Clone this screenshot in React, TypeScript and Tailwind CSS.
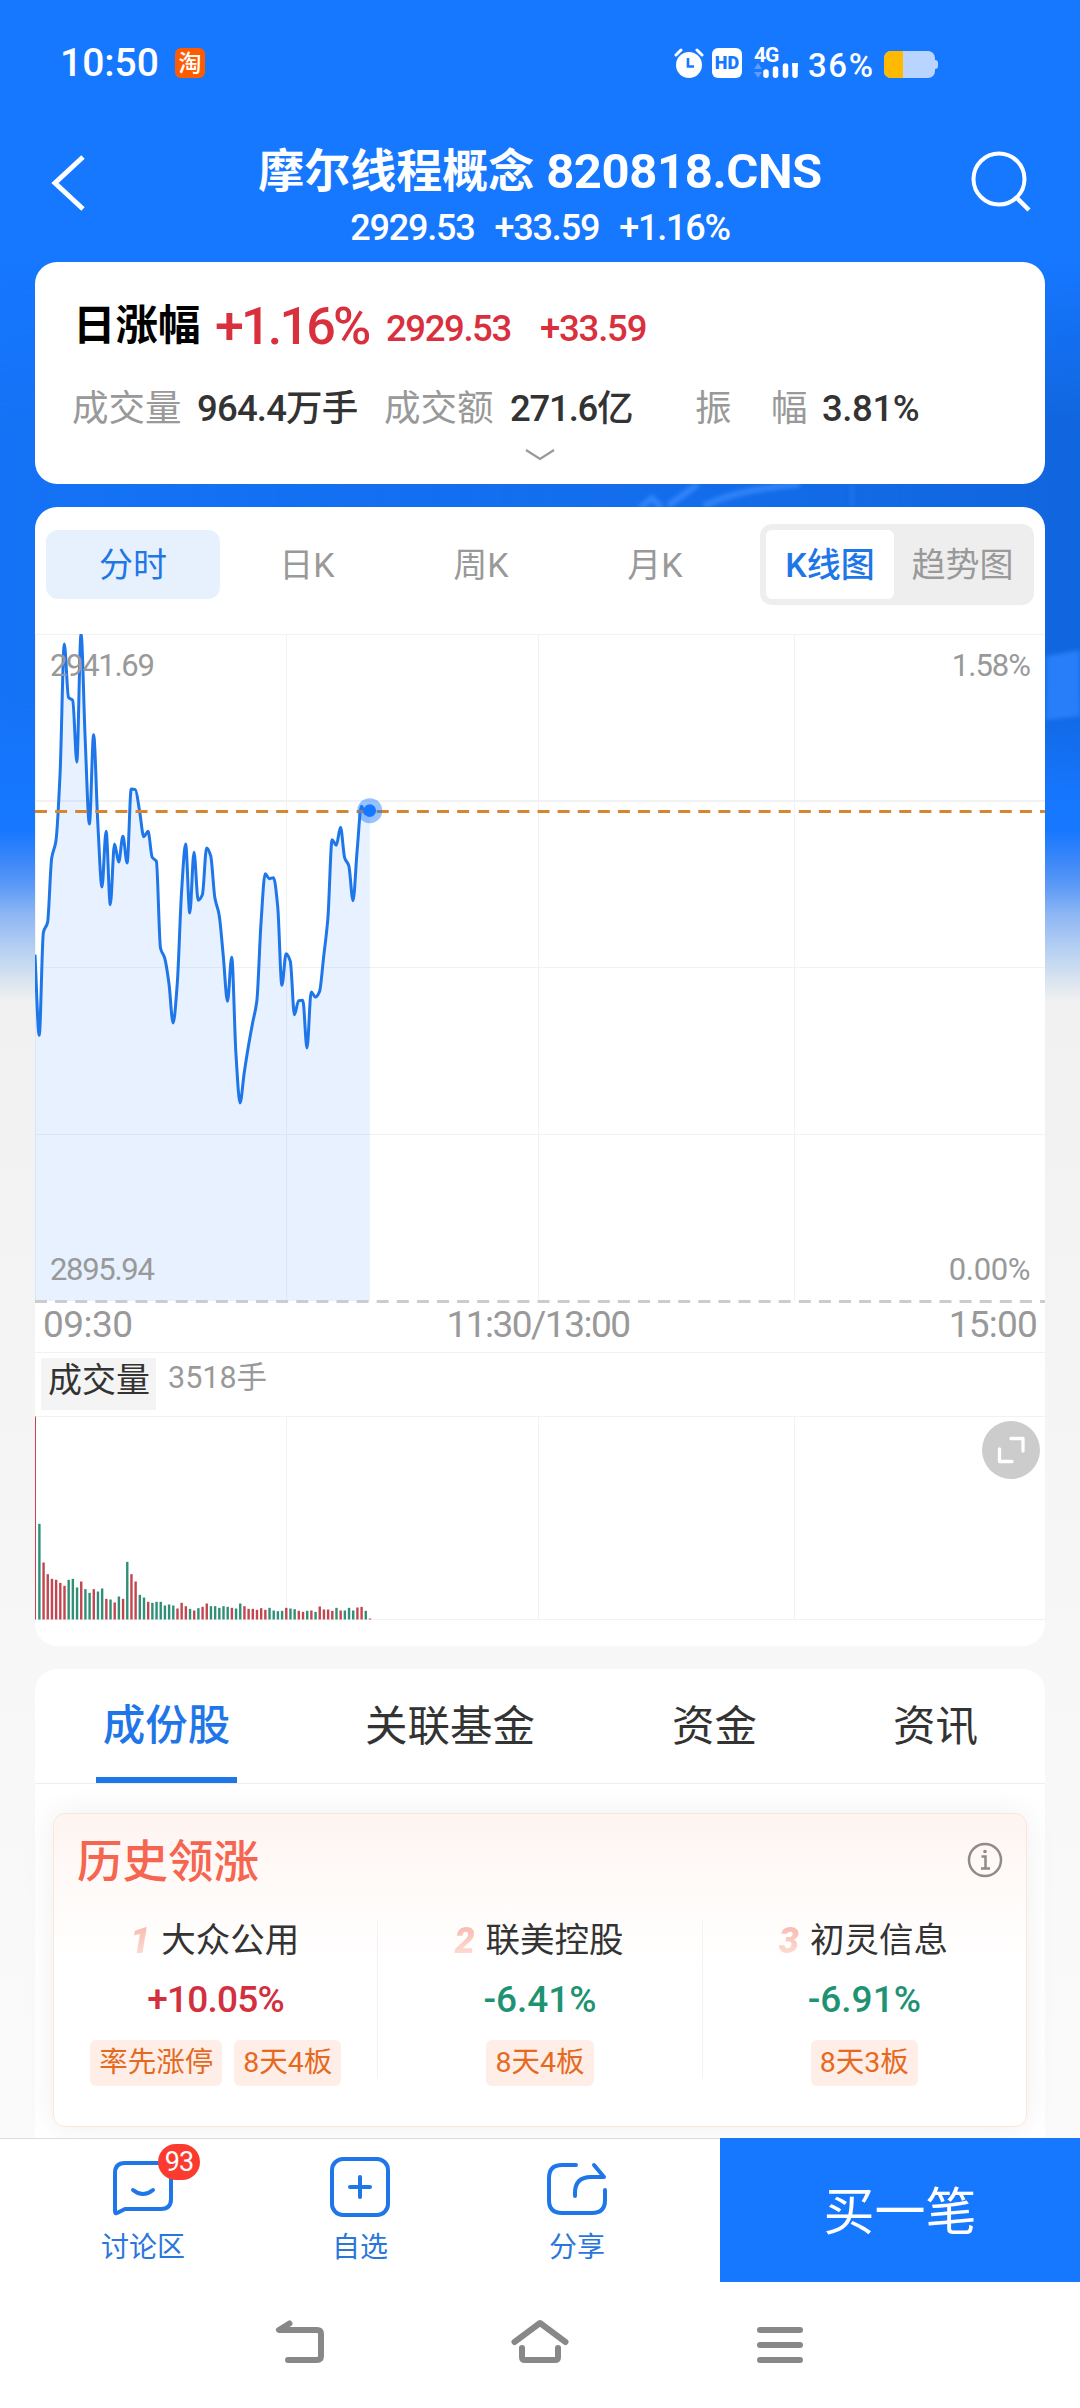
import React from "react";

/* ---------- data ---------- */

const MINUTE = 1011 / 241.6;

// Price level for every minute since the open, in chart pixels from the top grid line.
const PRICE = [
  1035, 1277, 968, 938, 745, 695, 490, 103, 263, 272, 457, 72, 390, 643, 375, 640, 832, 665, 885, 703, 757, 680, 760,
  538, 540, 605, 681, 665, 743, 755, 1015, 1045, 1120, 1240, 1120, 850, 703, 910, 728, 872, 855, 715, 740, 865, 915,
  1040, 1175, 1043, 1330, 1480, 1390, 1310, 1240, 1175, 940, 792, 807, 804, 890, 1127, 1032, 1055, 1215, 1173, 1172,
  1315, 1147, 1162, 1145, 1040, 925, 690, 707, 653, 745, 768, 873, 720, 590, 612, 603,
].map((v) => (v - 73) / 3);

// Traded volume per minute (bar height) and whether the minute closed up or down.
const VOLUME =
  "609r 287g 171r 136r 122r 119r 110r 101r 119g 122g 96g 114r 91g 80g 91r 84g 93g 62r 60g 51r 69g 62r 173g 136r 114r 74g 66g 53r 50g 53g 53g 42g 45g 42g 33r 50r 40r 32g 27r 34g 38r 48r 40g 40g 35g 40g 38g 35r 33g 48g 40r 32r 32r 29r 34r 29r 35g 27g 25g 26g 35r 33g 31g 26r 23r 26g 27r 23g 39r 30r 30r 26r 35g 27r 27g 35g 27g 36r 38r 26g 3r"
    .split(" ")
    .map((s) => ({ h: parseInt(s, 10) / 3, up: s.endsWith("r") }));

// Monotone cubic path through the equally spaced samples.
function smoothPath(ys: number[], dx: number) {
  const n = ys.length;
  const d = ys.slice(1).map((y, i) => (y - ys[i]) / dx);
  const m = ys.map((_, i) => {
    if (i === 0) return d[0];
    if (i === n - 1) return d[n - 2];
    if (d[i - 1] * d[i] <= 0) return 0;
    return (2 * d[i - 1] * d[i]) / (d[i - 1] + d[i]);
  });
  let p = `M0 ${ys[0].toFixed(1)}`;
  for (let i = 0; i < n - 1; i++) {
    const x = i * dx;
    p += `C${(x + dx / 3).toFixed(1)} ${(ys[i] + (m[i] * dx) / 3).toFixed(1)} ${(x + (2 * dx) / 3).toFixed(1)} ${(
      ys[i + 1] -
      (m[i + 1] * dx) / 3
    ).toFixed(1)} ${(x + dx).toFixed(1)} ${ys[i + 1].toFixed(1)}`;
  }
  return p;
}

/* ---------- header ---------- */

function StatusBar() {
  return (
    <div className="flex h-[126px] items-center pl-[60px] text-white">
      <span className="w-[115px] text-[39px] font-medium leading-none">10:50</span>
      <span className="flex h-[30px] w-[30px] items-center justify-center rounded-[6px] bg-[#ff5c00] text-[23px] font-medium leading-none">
        淘
      </span>
      <svg className="ml-[469px] h-[30px] w-[30px]" viewBox="0 0 30 30" fill="none">
        <circle cx="15" cy="17" r="13" fill="#fff" />
        <path d="M2 7L7 2M28 7L23 2" stroke="#fff" strokeWidth="3" strokeLinecap="round" />
        <path d="M14 10V18.5H20" stroke="#1677ff" strokeWidth="2.6" />
      </svg>
      <span className="ml-[8px] flex h-[30px] w-[30px] items-center justify-center rounded-[6px] bg-white text-[18px] font-black leading-none text-[#1677ff]">
        HD
      </span>
      <span className="ml-[12px] flex h-[30px] w-[46px] flex-col">
        <span className="h-[15px] text-[21px] font-bold leading-[15px] tracking-[-1px]">4G</span>
        <svg className="h-[15px] w-[46px]" viewBox="0 0 46 15">
          <path d="M0 6L4 0L8 6ZM0 9L4 15L8 9Z" fill="#5c9dff" />
          <path
            d="M12 9V12.200M21.500 6V12.200M31.500 3V12.200M41 0.500V12.200"
            stroke="#fff"
            strokeWidth="5.500"
            strokeLinecap="round"
          />
          <path d="M41 -3V4" stroke="#fff" strokeWidth="5.500" />
        </svg>
      </span>
      <span className="ml-[8px] mt-[4px] w-[76px] text-[33px] font-medium leading-none tracking-[1.600px]">36%</span>
      <span className="mt-[2px] flex items-center">
        <span className="flex h-[27px] w-[51px] overflow-hidden rounded-[7px] bg-[#b9d5ff]">
          <span className="w-[19px] bg-[#ffb900]" />
        </span>
        <span className="h-[9px] w-[3px] rounded-r-[3px] bg-[#b9d5ff]" />
      </span>
    </div>
  );
}

function TitleBar() {
  return (
    <div className="flex h-[136px] justify-between text-white">
      <svg className="ml-[44px] mr-[20px] mt-[24px] h-[66px] w-[48px]" viewBox="0 0 48 66" fill="none">
        <path d="M39 7L11 33L39 59" stroke="#fff" strokeWidth="5" />
      </svg>
      <div className="flex flex-col items-center">
        <div className="mt-[22px] flex h-[46px] items-center text-[46px] font-bold leading-none">
          摩尔线程概念<span className="ml-[12px] text-[49px] tracking-[-0.400px]">820818.CNS</span>
        </div>
        <div className="mt-[16px] flex gap-[20px] text-[36px] font-medium leading-none tracking-[-1.200px]">
          <span>2929.53</span>
          <span>+33.59</span>
          <span>+1.16%</span>
        </div>
      </div>
      <svg className="mr-[44px] mt-[20px] h-[72px] w-[68px]" viewBox="0 0 68 72" fill="none">
        <circle cx="31" cy="33" r="25.500" stroke="#fff" strokeWidth="4" />
        <path d="M49 52L61 64" stroke="#fff" strokeWidth="4.500" />
      </svg>
    </div>
  );
}

/* ---------- summary card ---------- */

function SummaryCard() {
  return (
    <section className="mx-[35px] flex h-[222px] flex-col rounded-[22px] bg-white">
      <div className="mt-[35px] flex h-[56px] items-center pl-[38px] leading-none text-[#d9303e]">
        <span className="mt-[2px] w-[142px] text-[42.500px] font-bold text-black">日涨幅</span>
        <span className="mt-[4px] w-[171px] text-[52px] font-medium tracking-[-2.800px]">+1.16%</span>
        <span className="mt-[9px] w-[154px] text-[36.500px] font-medium tracking-[-1.400px]">2929.53</span>
        <span className="mt-[9px] text-[36.500px] font-medium tracking-[-1.200px]">+33.59</span>
      </div>
      <div className="mt-[36px] flex h-[40px] items-center pl-[37px] text-[36.500px] leading-none">
        <span className="w-[125px] text-[#999]">成交量</span>
        <span className="w-[187px] font-medium tracking-[-0.800px] text-[#333]">964.4万手</span>
        <span className="w-[126px] text-[#999]">成交额</span>
        <span className="w-[185px] font-medium tracking-[-1.200px] text-[#333]">271.6亿</span>
        <span className="w-[76px] text-[#999]">振</span>
        <span className="w-[51px] text-[#999]">幅</span>
        <span className="font-medium tracking-[-0.400px] text-[#333]">3.81%</span>
      </div>
      <svg className="mx-auto mt-[17px] h-[16px] w-[32px]" viewBox="0 0 32 16" fill="none">
        <path d="M2 4L16 13L30 4" stroke="#999" strokeWidth="2.200" />
      </svg>
    </section>
  );
}

/* ---------- chart card ---------- */

function Grid({ height, rows }: { height: number; rows: number[] }) {
  return (
    <g stroke="#f2f2f2" strokeWidth="1">
      {rows.map((y) => (
        <path key={y} d={`M0 ${y}H1011`} />
      ))}
      {[0.5, 251.5, 503.5, 759.5, 1010.5].map((x) => (
        <path key={x} d={`M${x} 0V${height}`} />
      ))}
    </g>
  );
}

function PriceChart() {
  const line = smoothPath(PRICE, MINUTE);
  const endX = (PRICE.length - 1) * MINUTE;
  const endY = PRICE[PRICE.length - 1];
  return (
    <div className="relative h-[670px]">
      <svg className="block h-[670px] w-[1011px]" viewBox="0 0 1011 670" fill="none">
        <Grid height={667} rows={[0.5, 333.5, 500.5]} />
        <path d="M0 167H1011" stroke="#f2f2f2" strokeWidth="2" />
        <path d={`${line}V667H0Z`} fill="#1677ff" fillOpacity="0.100" />
        <path d={line} stroke="#1e76e8" strokeWidth="3" strokeLinejoin="round" />
        <path d="M0 177.500H1011" stroke="#d4872f" strokeWidth="3" strokeDasharray="12 8.100" />
        <path d="M0 667.500H1011" stroke="#ccc" strokeWidth="3" strokeDasharray="12 8.100" />
        <circle cx={endX} cy={endY} r="12.500" fill="#1677ff" fillOpacity="0.450" />
        <circle cx={endX} cy={endY} r="6.300" fill="#1677ff" />
      </svg>
      <div className="absolute inset-x-[15px] inset-y-0 flex flex-col justify-between pb-[19px] pt-[16px] text-[31px] leading-none text-[#999]">
        <div className="flex justify-between">
          <span className="tracking-[-1.300px]">2941.69</span>
          <span className="tracking-[-1px]">1.58%</span>
        </div>
        <div className="flex justify-between">
          <span className="tracking-[-1.300px]">2895.94</span>
          <span className="tracking-[-0.400px]">0.00%</span>
        </div>
      </div>
    </div>
  );
}

function VolumeChart() {
  return (
    <div className="relative h-[204px]">
      <svg className="block h-[204px] w-[1011px]" viewBox="0 0 1011 204">
        <Grid height={203} rows={[0.5, 203.5]} />
        {VOLUME.map((v, i) => (
          <rect
            key={i}
            x={i === 0 ? 0 : i * MINUTE - 1}
            y={203.5 - v.h}
            width={i === 0 ? 1 : 2.4}
            height={v.h}
            fill={v.up ? "#c2464f" : "#2f8f77"}
          />
        ))}
      </svg>
      <svg className="absolute right-[5px] top-[5px] h-[58px] w-[58px]" viewBox="0 0 58 58" fill="none">
        <circle cx="29" cy="29" r="29" fill="#ccc" />
        <path
          d="M29 17.500H41V30M17.500 28V40.500H30"
          stroke="#fff"
          strokeWidth="3.300"
          strokeLinecap="round"
          strokeLinejoin="round"
        />
      </svg>
    </div>
  );
}

function ChartCard() {
  return (
    <section className="mx-[35px] mt-[23px] flex h-[1139px] flex-col overflow-hidden rounded-[22px] bg-white">
      <div className="mt-[17px] flex h-[81px] items-center pl-[11px] text-[34px] leading-none text-[#999]">
        <span className="flex h-[69px] w-[174px] items-center justify-center rounded-[12px] bg-[#e7f1fe] text-[#1f76e6]">
          分时
        </span>
        {["日K", "周K", "月K"].map((t) => (
          <span key={t} className="w-[174px] text-center">
            {t}
          </span>
        ))}
        <div className="ml-[18px] flex h-[81px] w-[274px] items-center rounded-[12px] bg-[#eee] pl-[6px]">
          <span className="flex h-[69px] w-[128px] items-center justify-center rounded-[6px] bg-white font-medium text-[#1f76e6]">
            K线图
          </span>
          <span className="w-[137px] text-center">趋势图</span>
        </div>
      </div>
      <div className="h-[29px]" />
      <PriceChart />
      <div className="flex h-[49px] justify-between border-b border-[#f2f2f2] px-[8px] pt-[2px] text-[37px] leading-none text-[#999]">
        <span className="w-[200px] tracking-[-0.500px]">09:30</span>
        <span className="pr-[4px] tracking-[-1.500px]">11:30/13:00</span>
        <span className="w-[200px] text-right tracking-[-0.800px]">15:00</span>
      </div>
      <div className="flex h-[63px] pl-[6px] pt-[5px] leading-none">
        <span className="h-[52px] w-[115px] bg-[#f4f4f4] pl-[7px] pt-[5px] text-[34px] text-[#333]">成交量</span>
        <span className="ml-[12px] mt-[5px] text-[30.500px] text-[#999]">3518手</span>
      </div>
      <VolumeChart />
    </section>
  );
}

/* ---------- constituents card ---------- */

function Tag({ children }: { children: React.ReactNode }) {
  return (
    <span className="flex h-[46px] items-center rounded-[6px] bg-[#feeee7] px-[9px] text-[28.500px] leading-none text-[#e56a1f]">
      {children}
    </span>
  );
}

type Leader = { rank: string; name: string; change: string; up: boolean; tags: string[] };

const LEADERS: Leader[] = [
  { rank: "1", name: "大众公用", change: "+10.05%", up: true, tags: ["率先涨停", "8天4板"] },
  { rank: "2", name: "联美控股", change: "-6.41%", up: false, tags: ["8天4板"] },
  { rank: "3", name: "初灵信息", change: "-6.91%", up: false, tags: ["8天3板"] },
];

function LeaderColumn({ rank, name, change, up, tags }: Leader) {
  return (
    <div className="flex h-[158px] flex-1 flex-col items-center border-r border-[#f3f3f3] last:border-r-0">
      <div className="flex h-[38px] items-center gap-[8px] pr-[2px] pt-[2px] leading-none">
        <span className="bg-gradient-to-b from-[#f7b5ab] to-[#fde0d6] bg-clip-text pr-[3px] pt-[2px] text-[36px] font-black italic text-transparent">
          {rank}
        </span>
        <span className="text-[34.500px] text-[#333]">{name}</span>
      </div>
      <div
        className={
          up
            ? "mt-[24px] text-[37px] font-medium leading-[36px] tracking-[-0.800px] text-[#d2303e]"
            : "mt-[24px] text-[37px] font-medium leading-[36px] text-[#1f9274]"
        }
      >
        {change}
      </div>
      <div className="mt-[22px] flex gap-[12px]">
        {tags.map((t) => (
          <Tag key={t}>{t}</Tag>
        ))}
      </div>
    </div>
  );
}

function ConstituentsCard() {
  return (
    <section className="mx-[35px] mt-[23px] flex h-[500px] flex-col rounded-t-[22px] bg-white">
      <div className="flex h-[115px] border-b border-[#eee] text-[42.500px] leading-none text-[#333]">
        <div className="ml-[61px] flex w-[141px] items-center justify-center border-b-[6px] border-[#1f76e8] pt-[7px] text-center font-medium text-[#1f76e8]">
          成份股
        </div>
        <div className="ml-[128px] mt-[37px] w-[307px]">关联基金</div>
        <div className="mt-[37px] w-[221px]">资金</div>
        <div className="mt-[37px]">资讯</div>
      </div>
      <div className="mx-[18px] mt-[29px] flex h-[314px] flex-col rounded-[12px] border border-[#fce6d8] bg-[linear-gradient(#fef4f1_0px,#fffaf8_65px,#ffffff_150px)] shadow-[0_0_30px_rgba(0,0,0,0.07)]">
        <div className="flex h-[68px] items-start justify-between pl-[23px] pr-[23px] pt-[26px]">
          <span className="text-[45.500px] font-medium leading-none text-[#f5654f]">历史领涨</span>
          <svg className="mt-[2px] h-[36px] w-[36px]" viewBox="0 0 36 36" fill="none">
            <circle cx="18" cy="18" r="16" stroke="#8c8c8c" strokeWidth="2.500" />
            <path d="M14.500 14.500H18.500V26M14 26.500H23" stroke="#8c8c8c" strokeWidth="2.500" />
            <circle cx="18" cy="9.500" r="1.800" fill="#8c8c8c" />
          </svg>
        </div>
        <div className="mt-[38px] flex">
          {LEADERS.map((l) => (
            <LeaderColumn key={l.rank} {...l} />
          ))}
        </div>
      </div>
    </section>
  );
}

/* ---------- bottom bars ---------- */

function ActionBar() {
  return (
    <div className="flex h-[144px] border-t border-[#dcdcdc] bg-white text-[28px] leading-none text-[#2a77dc]">
      <div className="relative flex w-[286px] flex-col items-center pt-[18px]">
        <svg className="h-[60px] w-[60px]" viewBox="0 0 60 60" fill="none" stroke="#1f76e8" strokeWidth="4">
          <path d="M12 6H48Q58 6 58 16V42Q58 52 48 52H12L4 56Q2 57 2 54V16Q2 6 12 6Z" strokeLinejoin="round" />
          <path d="M20 33Q30 41 40 33" strokeLinecap="round" />
        </svg>
        <span className="mt-[17px]">讨论区</span>
        <span className="absolute left-[158px] top-[5px] flex h-[36px] w-[42px] items-center justify-center rounded-full bg-[#fb3b30] text-[27px] tracking-[-1px] text-white">
          93
        </span>
      </div>
      <div className="flex w-[148px] flex-col items-center pt-[18px]">
        <svg className="h-[60px] w-[60px]" viewBox="0 0 60 60" fill="none" stroke="#1f76e8" strokeWidth="4">
          <rect x="2" y="2" width="56" height="56" rx="11" />
          <path d="M20 30H40M30 20V40" strokeLinecap="round" />
        </svg>
        <span className="mt-[17px]">自选</span>
      </div>
      <div className="flex w-[286px] flex-col items-center pt-[18px]">
        <svg
          className="h-[60px] w-[60px]"
          viewBox="0 0 60 60"
          fill="none"
          stroke="#1f76e8"
          strokeWidth="4"
          strokeLinecap="round"
          strokeLinejoin="round"
        >
          <path d="M29 8H15Q2 8 2 21V43Q2 56 15 56H45Q58 56 58 43V33" />
          <path d="M28 39V36Q28 20 44 20H57L47 8" />
        </svg>
        <span className="mt-[17px]">分享</span>
      </div>
      <div className="-mt-px flex w-[360px] items-center justify-center bg-[#1677ff] pt-[4px] text-[51px] text-white">
        买一笔
      </div>
    </div>
  );
}

function SystemNav() {
  return (
    <div className="flex h-[126px] bg-white pl-[270px] pt-[30px]">
      <svg
        className="h-[60px] w-[540px]"
        viewBox="0 0 540 60"
        fill="none"
        stroke="#888"
        strokeWidth="6"
        strokeLinecap="round"
        strokeLinejoin="round"
      >
        <path d="M19.500 11.500L9 18H47Q51 18 51 22V44Q51 48 47 48H18" />
        <path d="M244.500 30L270 11L295.500 30M252 36V45Q252 48 255 48H285Q288 48 288 45V36" />
        <path d="M490 18H530M490 33H530M490 48H530" />
      </svg>
    </div>
  );
}

function Backdrop() {
  return (
    <svg className="absolute left-0 top-0 h-[1000px] w-[1080px]" viewBox="0 0 1080 1000" fill="none">
      <defs>
        <linearGradient id="shade" x1="0" y1="0" x2="1" y2="0">
          <stop offset="0" stopColor="#1060d0" stopOpacity="0.2" />
          <stop offset="0.5" stopColor="#1060d0" stopOpacity="0.35" />
          <stop offset="1" stopColor="#0f5fd0" stopOpacity="0.7" />
        </linearGradient>
        <linearGradient id="shadeFade" x1="0" y1="0" x2="0" y2="1">
          <stop offset="0" stopColor="#fff" stopOpacity="0" />
          <stop offset="0.3" stopColor="#fff" />
          <stop offset="0.8" stopColor="#fff" />
          <stop offset="1" stopColor="#fff" stopOpacity="0" />
        </linearGradient>
        <mask id="shadeMask">
          <rect y="262" width="1080" height="538" fill="url(#shadeFade)" />
        </mask>
        <filter id="soft" x="-20%" y="-40%" width="140%" height="180%">
          <feGaussianBlur stdDeviation="2" />
        </filter>
      </defs>
      <rect y="262" width="1080" height="538" fill="url(#shade)" mask="url(#shadeMask)" />
      <g filter="url(#soft)" stroke="#3f8dff" strokeOpacity="0.75">
        <path d="M640 508L652 498L662 508M668 506L698 484M704 506Q735 490 800 484" strokeWidth="6" />
        <path d="M852 484V507" strokeWidth="3" strokeOpacity="0.4" />
      </g>
      <path d="M1046 656L1080 650V716L1046 720Z" fill="#2f84ff" opacity="0.800" filter="url(#soft)" />
    </svg>
  );
}

export default function App() {
  return (
    <div className="relative flex h-[2408px] w-[1080px] flex-col overflow-hidden bg-[linear-gradient(#1677ff_0px,#1677ff_830px,#3d88f8_862px,#5a99f6_885px,#8db6f4_914px,#b4cff2_948px,#d9e4f0_980px,#f1f1f1_1002px,#f2f2f2_1150px,#f7f7f7_1650px,#fafafa_2100px)] font-['Roboto','Noto_Sans_CJK_SC',sans-serif]">
      <Backdrop />
      <div className="relative h-[2138px] overflow-hidden">
        <StatusBar />
        <TitleBar />
        <SummaryCard />
        <ChartCard />
        <ConstituentsCard />
      </div>
      <div className="relative">
        <ActionBar />
        <SystemNav />
      </div>
    </div>
  );
}
